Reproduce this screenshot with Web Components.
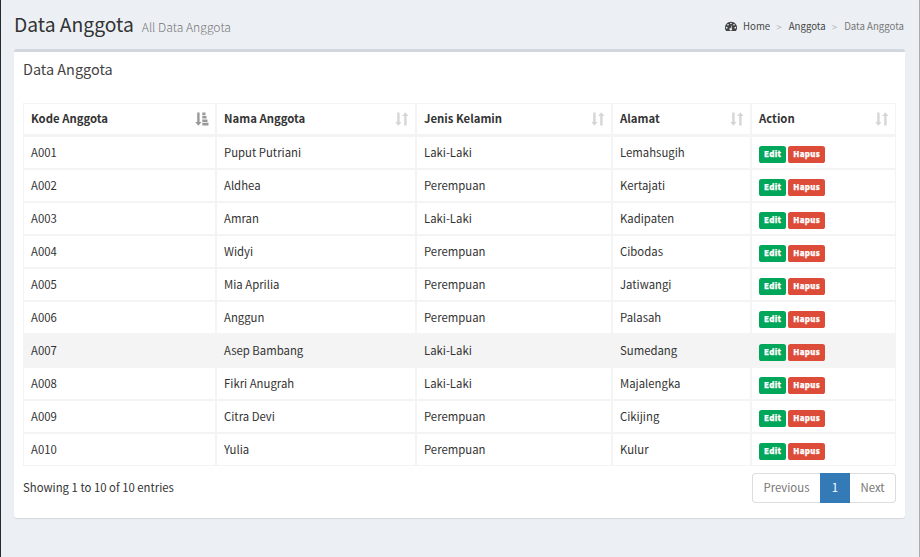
<!DOCTYPE html>
<html lang="id">
<head>
<meta charset="utf-8">
<title>Data Anggota</title>
<style>
html,body{margin:0;height:100%}
body{background:#ecf0f5;color:#333;font:11.35px/20px "Noto Sans CJK SC","Noto Sans",sans-serif;overflow:hidden}
</style>
</head>
<body>
<app-page>
  <page-header slot="header" heading="Data Anggota" sub="All Data Anggota"></page-header>
  <data-box heading="Data Anggota">
    <member-table></member-table>
    <table-footer></table-footer>
  </data-box>
</app-page>
<script>
const define=(name,render)=>customElements.define(name,class extends HTMLElement{
  connectedCallback(){
    if(this.shadowRoot)return;
    this.attachShadow({mode:"open"}).innerHTML="<style>*{box-sizing:border-box}</style>"+render(this);
  }
});

define("app-page",()=>`<style>
:host{display:block;box-sizing:border-box;height:557px;padding:0 14px 0 13px;border-left:1px solid #222d32;border-right:1px solid #a9abad}
</style><slot name="header"></slot><slot></slot>`);

define("page-header",el=>`<style>
:host{display:flex;justify-content:space-between;height:49px}
h1{margin:0;padding-top:11px;font-weight:400;font-size:19.3px;line-height:26px;white-space:nowrap;display:flex;align-items:baseline}
small{font-size:12.15px;font-weight:300;color:#777;margin-left:8px;line-height:20px}
</style><h1><span>${el.getAttribute("heading")}</span><small>${el.getAttribute("sub")}</small></h1><bread-crumb></bread-crumb>`);

define("bread-crumb",()=>`<style>
:host{display:flex;align-items:center;height:17px;margin:18px 1px 0 0;font-size:9.65px;line-height:17px;white-space:nowrap;color:#444}
svg{width:12px;height:10px;margin:0 6px 1px 0}
i{font-style:normal;color:#b8b8b8;padding:0 7px 0 6px;font-size:10px}
.on{color:#777}
</style><svg viewBox="0 0 1792 1536" preserveAspectRatio="none"><path fill="#444" fill-rule="evenodd" d="M896 128A896 896 0 0 0 142 1508Q160 1536 195 1536H1597Q1632 1536 1650 1508A896 896 0 0 0 896 128ZM256 896a128 128 0 1 1 0 256a128 128 0 0 1 0-256ZM448 448a128 128 0 1 1 0 256a128 128 0 0 1 0-256ZM896 256a128 128 0 1 1 0 256a128 128 0 0 1 0-256ZM1344 448a128 128 0 1 1 0 256a128 128 0 0 1 0-256ZM1536 896a128 128 0 1 1 0 256a128 128 0 0 1 0-256ZM1004 689Q1062 670 1072 721L971 1103A192 192 0 1 1 847 1070Z"/></svg><span>Home</span><i>&gt;</i><span>Anggota</span><i>&gt;</i><span class="on">Data Anggota</span>`);

define("data-box",el=>`<style>
:host{display:block;box-sizing:border-box;height:469px;background:#fff;border-top:3px solid #d2d6de;border-radius:3px;box-shadow:0 1px 1px rgba(0,0,0,.1);padding:0 9px}
h3{margin:0;height:51px;padding-top:7px;font-size:14.45px;font-weight:400;line-height:20px;color:#444}
</style><h3>${el.getAttribute("heading")}</h3><slot></slot>`);

define("sort-icon",el=>`<style>
:host{display:block;width:14px;height:14px;color:${el.hasAttribute("active")?"#999":"#d6d6d6"}}
svg{display:block}
</style><svg width="14" height="14" viewBox="-.3 0 14 14" fill="currentColor">${el.hasAttribute("active")
 ?'<path d="M1.9 .5h2.4v9.5h2L3.1 13.7 0 10h1.9zM7 .5h3.2v2.7H7zM7 4h4.2v2.6H7zM7 7.4h5.2V10H7zM7 10.8h6.2v2.7H7z"/>'
 :'<path d="M1.9 .5h2.4v9.5h2L3.1 13.7 0 10h1.9zM8.9 13.5V4h-2L10 .3 13.2 4h-1.9v9.5z"/>'}</svg>`);

define("tag-label",el=>`<style>
:host{display:flex;justify-content:center;box-sizing:border-box;width:${el.getAttribute("w")}px;height:17px;border-radius:2.6px;background:${el.getAttribute("bg")};color:#fff;font-weight:900;font-size:7.9px;letter-spacing:.3px;padding-left:.3px;line-height:16px;-webkit-text-stroke:.25px #fff}
</style><slot></slot>`);

const rows=[["A001","Puput Putriani",1,"Lemahsugih"],["A002","Aldhea",0,"Kertajati"],["A003","Amran",1,"Kadipaten"],["A004","Widyi",0,"Cibodas"],["A005","Mia Aprilia",0,"Jatiwangi"],["A006","Anggun",0,"Palasah"],["A007","Asep Bambang",1,"Sumedang"],["A008","Fikri Anugrah",1,"Majalengka"],["A009","Citra Devi",0,"Cikijing"],["A010","Yulia",0,"Kulur"]];
define("member-table",()=>`<style>
:host{display:block}
.row{display:grid;grid-template-columns:193px 200px 196px 139px 145px;height:33px}
.row>div{border:1px solid #f4f4f4;padding:5px 7px 0;line-height:20px;display:flex;white-space:nowrap}
.row.head>div{font-weight:700;border-bottom-width:2px;justify-content:space-between;padding:4px 6px 0 7px}
.head sort-icon{margin-top:4px}
.hover>div{background:#f4f4f4}
tag-label{margin:4px 2px 0 0}
</style><div class="row head">${["Kode Anggota","Nama Anggota","Jenis Kelamin","Alamat","Action"].map((t,i)=>`<div><span>${t}</span><sort-icon ${i?"":"active"}></sort-icon></div>`).join("")}</div>
${rows.map(([k,n,g,a])=>`<div class="row${k=="A007"?" hover":""}"><div>${k}</div><div>${n}</div><div>${g?"Laki-Laki":"Perempuan"}</div><div>${a}</div><div><tag-label w="27" bg="#00a65a">Edit</tag-label><tag-label w="37" bg="#dd4b39">Hapus</tag-label></div></div>`).join("")}`);

define("table-footer",()=>`<style>
:host{display:flex;justify-content:space-between;padding-top:7px}
.info{padding-top:4px}
.pages{display:flex;width:144px;height:30px;line-height:26px;color:#777}
.pages span{border:1px solid #ddd;text-align:center;background:#fff;flex:none}
.pages .prev{width:68px;border-radius:4px 0 0 4px;border-right:0}
.pages .cur{width:30px;background:#337ab7;border-color:#337ab7;color:#fff}
.pages .next{width:46px;border-radius:0 4px 4px 0;border-left:0}
</style><div class="info">Showing 1 to 10 of 10 entries</div><div class="pages"><span class="prev">Previous</span><span class="cur">1</span><span class="next">Next</span></div>`);
</script>
</body>
</html>
